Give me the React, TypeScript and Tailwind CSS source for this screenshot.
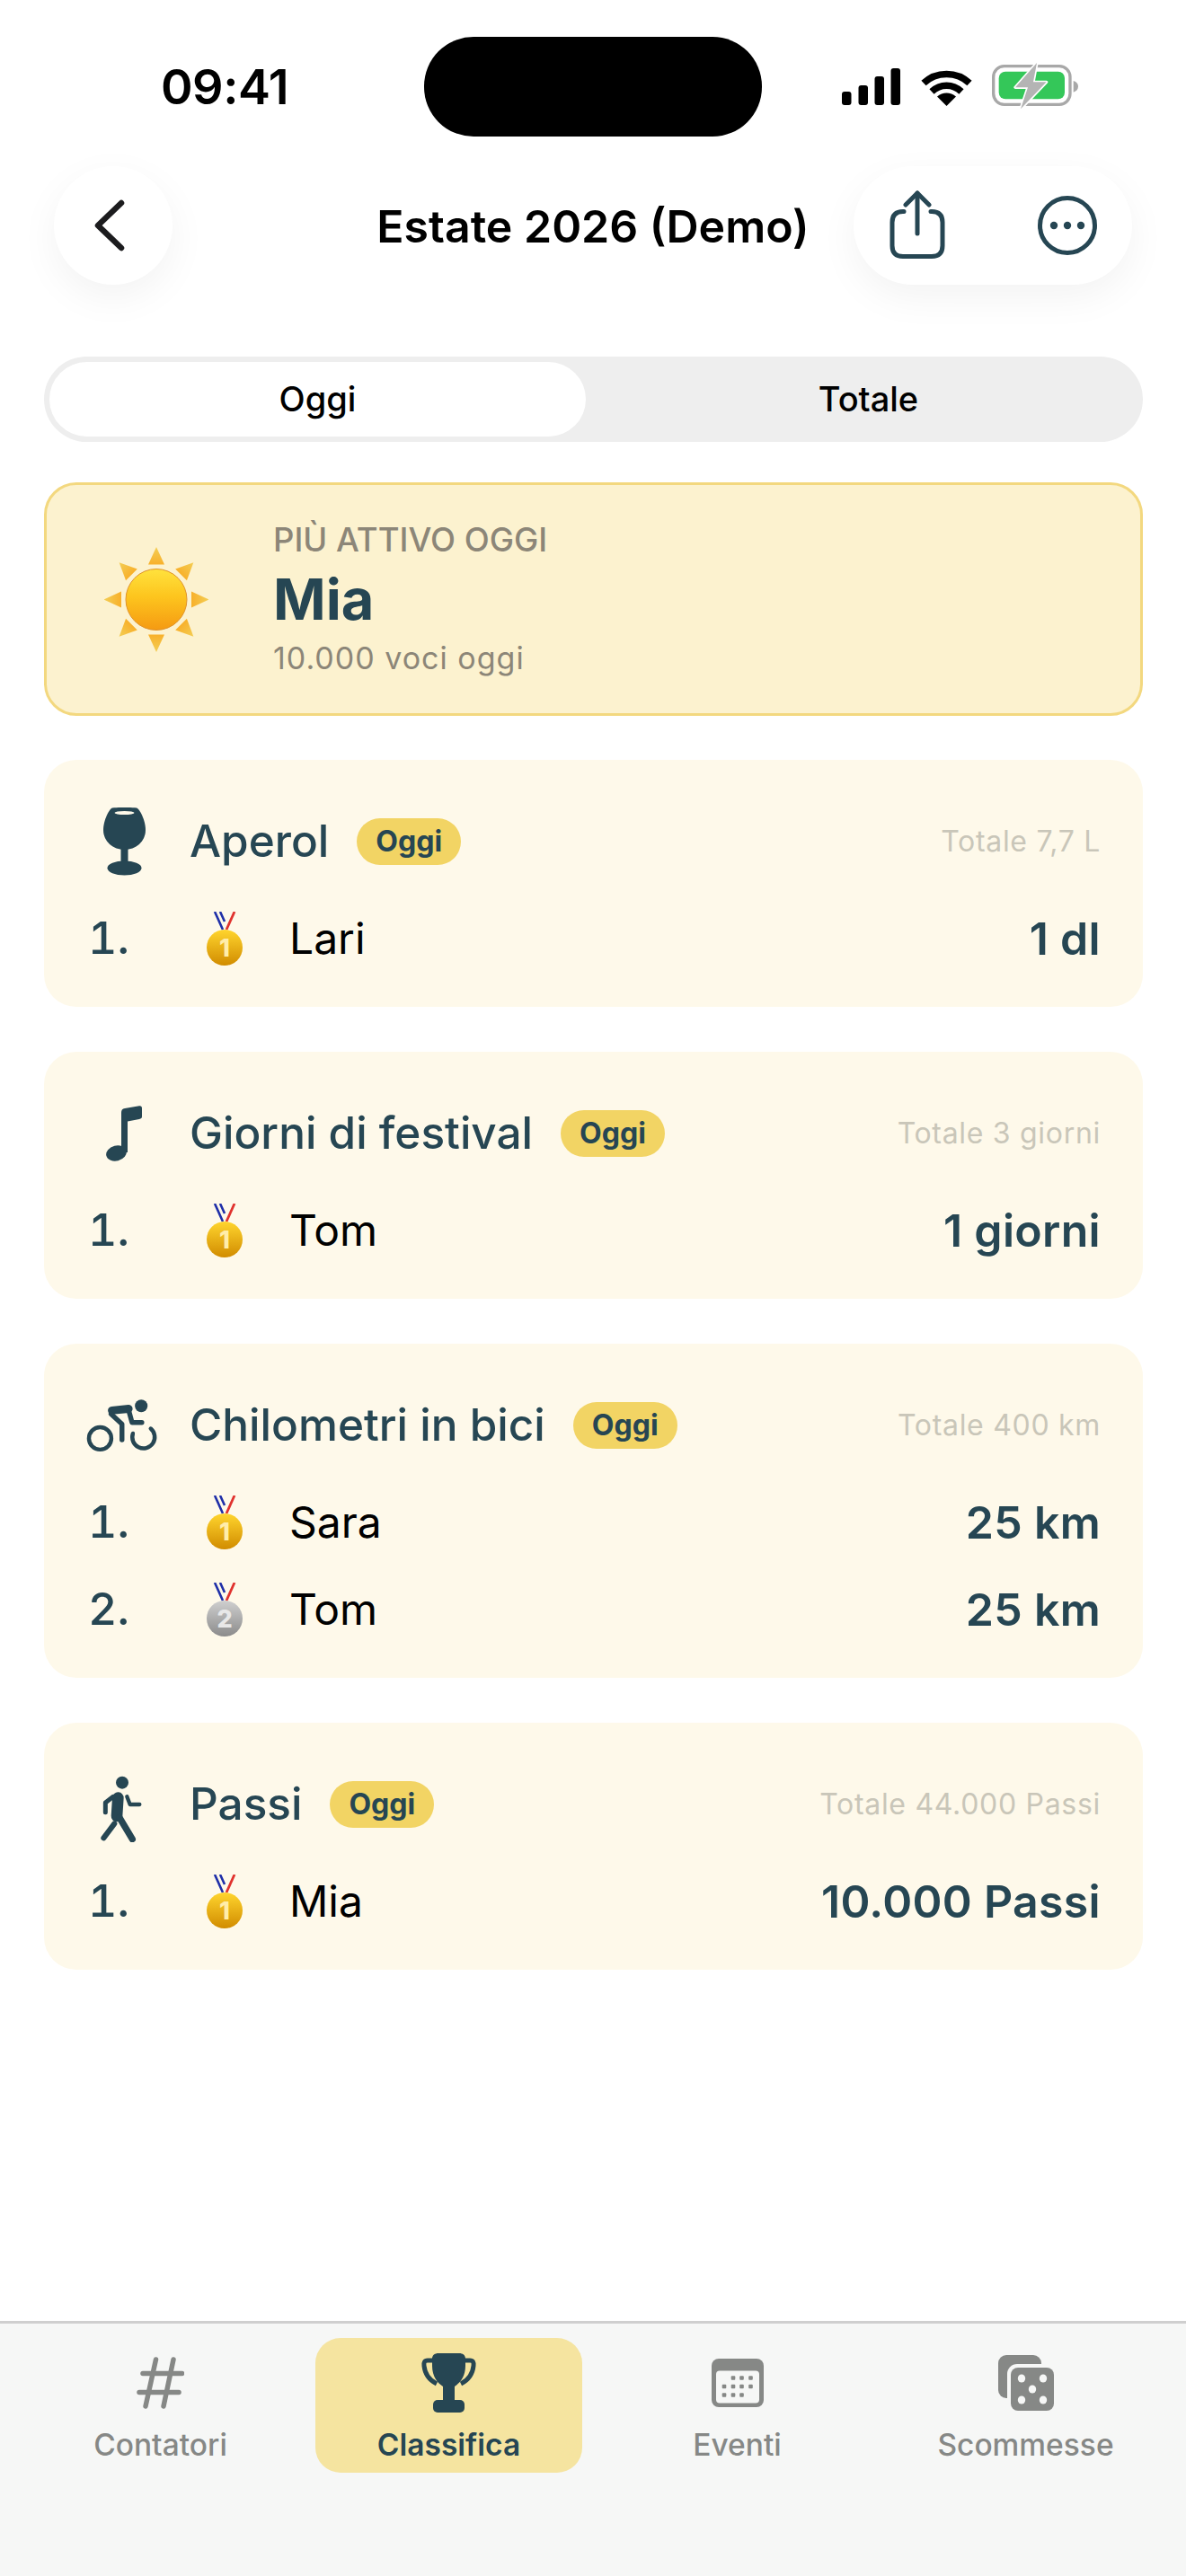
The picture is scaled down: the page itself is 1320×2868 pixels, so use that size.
import React from 'react';

const navy = '#264653';
const grey = '#868886';

function Signal() {
  return (
    <svg width="65" height="41" viewBox="0 0 65 41" fill="#000">
      <rect x="0" y="26" width="10.5" height="15" rx="3" />
      <rect x="18.5" y="19" width="10.5" height="22" rx="3" />
      <rect x="36.5" y="9" width="10.5" height="32" rx="3" />
      <rect x="54.5" y="0" width="10.5" height="41" rx="3" />
    </svg>
  );
}

function Wifi() {
  return (
    <svg width="57" height="42" viewBox="0 0 57 42" fill="none">
      <path d="M3 16.5C17 3 40 3 54 16.5" stroke="#000" strokeWidth="7.5" />
      <path d="M12 26C21.5 17 35.5 17 45 26" stroke="#000" strokeWidth="7.5" />
      <path d="M28.5 42L18 31.5C24 26 33 26 39 31.5Z" fill="#000" />
    </svg>
  );
}

function Battery() {
  return (
    <svg width="104" height="54" viewBox="0 0 312 162" fill="none">
      <rect x="5" y="17" width="256" height="128" rx="36" stroke="#a8a8a8" strokeWidth="10" />
      <rect x="23" y="35" width="220" height="92" rx="22" fill="#34c759" />
      <path d="M272 66c11 3 16 10 16 19s-5 16-16 19z" fill="#a8a8a8" />
      <path d="M150 6L78 88H120L96 160L182 70H138L150 6Z" fill="#b4b4b4" stroke="#fff" strokeWidth="10" strokeLinejoin="round" paintOrder="stroke" />
    </svg>
  );
}

function Share() {
  return (
    <svg width="62" height="76" viewBox="0 0 62 76" fill="none" stroke={navy} strokeWidth="5" strokeLinecap="round" strokeLinejoin="round">
      <path d="M16 23.5H15C7 23.5 3 27.5 3 35.5V61.5C3 69.5 7 73.5 15 73.5H47C55 73.5 59 69.5 59 61.5V35.5C59 27.5 55 23.5 47 23.5H46" />
      <path d="M31 3V48" />
      <path d="M18 16L31 3L44 16" />
    </svg>
  );
}

function More() {
  return (
    <svg width="66" height="66" viewBox="0 0 66 66" fill="none">
      <circle cx="33" cy="33" r="30.5" stroke={navy} strokeWidth="5" />
      <circle cx="18" cy="33" r="4.2" fill={navy} />
      <circle cx="33" cy="33" r="4.2" fill={navy} />
      <circle cx="48" cy="33" r="4.2" fill={navy} />
    </svg>
  );
}

function Sun() {
  const angles = [0, 45, 90, 135, 180, 225, 270, 315];
  return (
    <svg width="116" height="117" viewBox="0 0 116 117">
      <defs>
        <linearGradient id="sunDisc" x1="0" y1="0" x2="0" y2="1">
          <stop offset="0" stopColor="#ffe23d" />
          <stop offset="0.45" stopColor="#fdc51e" />
          <stop offset="1" stopColor="#f59a12" />
        </linearGradient>
        <linearGradient id="sunRay" x1="0" y1="0" x2="0" y2="1">
          <stop offset="0" stopColor="#f3ce55" />
          <stop offset="1" stopColor="#f8b02a" />
        </linearGradient>
      </defs>
      {angles.map((a) => (
        <polygon key={a} points="58,0 49,19.5 67,19.5" fill="url(#sunRay)" transform={`rotate(${a} 58 58.5)`} />
      ))}
      <circle cx="58" cy="58.5" r="34" fill="url(#sunDisc)" stroke="#e0932a" strokeWidth="1" />
    </svg>
  );
}

function Medal({ place }: { place: number }) {
  const silver = place === 2;
  const id = silver ? 'medalSilver' : 'medalGold';
  return (
    <svg width="40" height="60" viewBox="0 0 40 60">
      <defs>
        <linearGradient id={id} x1="0" y1="0" x2="0" y2="1">
          <stop offset="0" stopColor={silver ? '#cfcfcf' : '#ffd52e'} />
          <stop offset="1" stopColor={silver ? '#8b8b8b' : '#d18c00'} />
        </linearGradient>
      </defs>
      <path d="M9 0L18 20M15 0L20 11" stroke="#1f2fa8" strokeWidth="2.6" fill="none" />
      <path d="M31 0L22 20" stroke="#e0322e" strokeWidth="2.8" fill="none" />
      <circle cx="20" cy="40" r="20" fill={`url(#${id})`} />
      <text x="20" y="50" textAnchor="middle" fontFamily="Inter" fontWeight="800" fontSize="27" fill={silver ? '#e8e8e8' : '#ffedaa'}>
        {place}
      </text>
    </svg>
  );
}

function Glass() {
  return (
    <svg width="47" height="76" viewBox="0 0 47 76">
      <path d="M10 .5C16-.2 31-.2 37 .5 40 1 47 14 47 25 47 38 36 47 23.5 47 11 47 0 38 0 25 0 14 7 1 10 .5Z" fill={navy} />
      <rect x="19.5" y="44" width="8" height="20" fill={navy} />
      <ellipse cx="23.5" cy="67.5" rx="19" ry="8" fill={navy} />
      <ellipse cx="23.5" cy="6" rx="11" ry="2" fill="#fef9ea" />
    </svg>
  );
}

function Note() {
  return (
    <svg width="40" height="62" viewBox="0 0 40 62">
      <ellipse cx="11.5" cy="53" rx="11.5" ry="8.5" transform="rotate(-14 11.5 53)" fill={navy} />
      <path d="M17 52V8C17 5 18 3.500 21 3L37 .3C39 0 40 1 40 3V12C40 14 39 14.500 37 15L24 17.500V52Z" fill={navy} />
    </svg>
  );
}

function Bike() {
  return (
    <svg width="100" height="80" viewBox="0 0 300 240" fill="none" stroke={navy} strokeLinecap="round" strokeLinejoin="round">
      <circle cx="67" cy="165" r="39" strokeWidth="14" />
      <path d="M181 148A39 39 0 1 0 243 131" strokeWidth="14" />
      <circle cx="210" cy="52" r="22" fill={navy} stroke="none" />
      <path d="M108 68L166 62" strokeWidth="28" />
      <path d="M105 80L143 115V170" strokeWidth="17" />
      <path d="M166 66L178 110H212" strokeWidth="17" />
    </svg>
  );
}

function Walker() {
  return (
    <svg width="80" height="84" viewBox="0 0 240 252" fill="none" stroke={navy} strokeLinecap="round" strokeLinejoin="round">
      <circle cx="114" cy="53" r="21" fill={navy} stroke="none" />
      <path d="M100 104L96 165" strokeWidth="38" />
      <path d="M84 100L58 120V152" strokeWidth="15" />
      <path d="M130 100L140 126H172" strokeWidth="13" />
      <path d="M105 170L148 242" strokeWidth="22" />
      <path d="M88 190L52 238" strokeWidth="18" />
    </svg>
  );
}

function Hash() {
  return (
    <svg width="53" height="58" viewBox="0 0 53 58" fill="none" stroke={grey} strokeWidth="5.5" strokeLinecap="round">
      <path d="M21.500 3L10 55" />
      <path d="M41 3L30 55" />
      <path d="M7 18.500H50.500" />
      <path d="M3 39.500H47" />
    </svg>
  );
}

function Trophy() {
  return (
    <svg width="61" height="66" viewBox="0 0 61 66" fill="none">
      <path d="M14 8H7C3.500 8 2.500 10 3 14C4 24 9 30 17 34" stroke={navy} strokeWidth="5" />
      <path d="M47 8H54C57.500 8 58.500 10 58 14C57 24 52 30 44 34" stroke={navy} strokeWidth="5" />
      <path d="M19 0H42C46 0 49 2 49 6V14C49 26 43 33 37 37V53H24V37C18 33 12 26 12 14V6C12 2 15 0 19 0Z" fill={navy} />
      <rect x="13" y="52" width="35" height="14" rx="5" fill={navy} />
    </svg>
  );
}

function Calendar() {
  const rows: [number, number[]][] = [
    [21.5, [24, 33.500, 43.500]],
    [31, [14, 24, 33.500, 43.500]],
    [40.500, [14, 24, 33.500]],
  ];
  return (
    <svg width="58" height="54" viewBox="0 0 58 54">
      <rect width="58" height="54" rx="8" fill={grey} />
      <rect x="5" y="13.500" width="48" height="36" rx="4" fill="#f6f7f6" />
      {rows.map(([y, xs]) =>
        xs.map((x) => <rect key={`${x}-${y}`} x={x - 2.300} y={y - 2.300} width="4.600" height="4.600" rx="1" fill={grey} />),
      )}
    </svg>
  );
}

function Dice() {
  return (
    <svg width="62" height="62" viewBox="0 0 62 62">
      <rect width="48" height="48" rx="9" fill={grey} />
      <rect x="10" y="10" width="52" height="52" rx="11" fill="#f6f7f6" />
      <rect x="14" y="14" width="48" height="48" rx="8" fill={grey} />
      <g fill="#f6f7f6">
        <ellipse cx="26" cy="26" rx="4.200" ry="4.500" />
        <ellipse cx="50" cy="26" rx="4.200" ry="4.500" />
        <ellipse cx="38" cy="38" rx="4.200" ry="4.500" />
        <ellipse cx="26" cy="50" rx="4.200" ry="4.500" />
        <ellipse cx="50" cy="50" rx="4.200" ry="4.500" />
      </g>
    </svg>
  );
}

const cards = [
  { title: 'Aperol', icon: <Glass />, total: 'Totale 7,7 L', rows: [{ name: 'Lari', value: '1 dl' }] },
  { title: 'Giorni di festival', icon: <Note />, total: 'Totale 3 giorni', rows: [{ name: 'Tom', value: '1 giorni' }] },
  {
    title: 'Chilometri in bici',
    icon: <Bike />,
    total: 'Totale 400 km',
    rows: [
      { name: 'Sara', value: '25 km' },
      { name: 'Tom', value: '25 km' },
    ],
  },
  { title: 'Passi', icon: <Walker />, total: 'Totale 44.000 Passi', rows: [{ name: 'Mia', value: '10.000 Passi' }] },
];

const tabs = [
  { label: 'Contatori', icon: <Hash /> },
  { label: 'Classifica', icon: <Trophy />, active: true },
  { label: 'Eventi', icon: <Calendar /> },
  { label: 'Scommesse', icon: <Dice /> },
];

export default function App() {
  return (
    <div className="min-h-[2868px] w-[1320px] bg-white flex flex-col font-['Inter',sans-serif] text-black">
      {/* status bar */}
      <div className="flex items-center h-[111px] mt-[41px]">
        <div className="w-[472px] pl-[179px] text-[54px] font-semibold leading-none tracking-[-0.5px]">09:41</div>
        <div className="w-[376px] h-[111px] rounded-[55px] bg-black" />
        <div className="flex items-center pl-[89px]">
          <Signal />
          <div className="ml-[23px]">
            <Wifi />
          </div>
          <div className="ml-[22px] -translate-y-[2px]">
            <Battery />
          </div>
        </div>
      </div>

      {/* header */}
      <div className="grid grid-cols-[1fr_auto_1fr] items-center px-[60px] mt-[33px]">
        <button className="w-[132px] h-[132px] rounded-full bg-white shadow-[0_14px_44px_rgba(0,0,0,0.05)] flex items-center justify-center pr-[8px]">
          <svg width="34" height="58" viewBox="0 0 34 58" fill="none" stroke="#1c1c1e" strokeWidth="6.500" strokeLinecap="round" strokeLinejoin="round">
            <path d="M30 4L4 29L30 54" />
          </svg>
        </button>
        <div className="pt-[2px] text-[50px] font-semibold leading-none">Estate 2026 (Demo)</div>
        <div className="justify-self-end w-[310px] h-[132px] rounded-[66px] bg-white shadow-[0_14px_44px_rgba(0,0,0,0.05)] flex items-center pl-[40px]">
          <div className="-translate-y-[1px]">
            <Share />
          </div>
          <div className="ml-[103px]">
            <More />
          </div>
        </div>
      </div>

      {/* today / total switch */}
      <div className="ml-[49px] mr-[48px] mt-[80px] h-[95px] rounded-[48px] bg-[#eeeeee] p-[6px] flex text-[38px] font-medium">
        <div className="w-[597px] rounded-[42px] bg-white flex items-center justify-center">Oggi</div>
        <div className="ml-[15px] flex-1 flex items-center justify-center">Totale</div>
      </div>

      {/* most active */}
      <div className="ml-[49px] mr-[48px] mt-[45px] h-[260px] rounded-[36px] border-[3px] border-[#f3d87f] bg-[#fcf2cf] flex items-center pl-[64px]">
        <Sun />
        <div className="ml-[72px] flex flex-col">
          <div className="text-[36.5px] leading-[44px] font-medium text-[#8c8678]">PIÙ ATTIVO OGGI</div>
          <div className="text-[63px] leading-[88px] font-bold text-[#264653]">Mia</div>
          <div className="text-[34px] leading-[44px] tracking-[1px] text-[#8c8678]">10.000 voci oggi</div>
        </div>
      </div>

      {/* rankings */}
      <div className="ml-[49px] mr-[48px] mt-[49px] flex flex-col gap-[50px]">
        {cards.map((card) => (
          <div key={card.title} className="rounded-[36px] bg-[#fef9ea] pt-[46px] pb-[28px]">
            <div className="flex items-center h-[90px] pl-[41px] pr-[47px]">
              <div className="w-[96px] flex items-center justify-center">{card.icon}</div>
              <div className="ml-[25px] text-[49.5px] [font-weight:550] leading-none text-[#264653]">{card.title}</div>
              <div className="ml-[31px] h-[52px] px-[21px] rounded-[26px] bg-[#f2d464] flex items-center text-[32px] font-bold text-[#264653]">
                Oggi
              </div>
              <div className="ml-auto text-[32px] text-[#c9c6b9] tracking-[0.7px]">{card.total}</div>
            </div>
            <div className="mt-[14px] flex flex-col">
              {card.rows.map((row, i) => (
                <div key={row.name} className="flex items-center h-[97px] pl-[49px] pr-[47px]">
                  <div className="w-[132px] text-[50px] [font-weight:550] tabular-nums text-[#264653]">{i + 1}.</div>
                  <Medal place={i + 1} />
                  <div className="ml-[52px] text-[48px] leading-none">{row.name}</div>
                  <div className="ml-auto text-[50px] font-semibold tracking-[0.3px] leading-none text-[#264653]">{row.value}</div>
                </div>
              ))}
            </div>
          </div>
        ))}
      </div>

      {/* tab bar */}
      <div className="mt-auto h-[284px] border-t-[3px] border-[#cfcfcf] bg-[#f6f7f6] px-[18px] pt-[16px] grid grid-cols-4 items-start">
        {tabs.map((tab) => (
          <div
            key={tab.label}
            className={
              tab.active
                ? 'mx-[12px] h-[150px] rounded-[28px] bg-[#f5e4a0] flex flex-col items-center text-[#264653] font-semibold'
                : 'mx-[12px] h-[150px] rounded-[28px] flex flex-col items-center text-[#868886] font-medium'
            }
          >
            <div className="h-[100px] flex items-center justify-center">{tab.icon}</div>
            <div className="text-[33.5px] leading-[38px]">{tab.label}</div>
          </div>
        ))}
      </div>
    </div>
  );
}
